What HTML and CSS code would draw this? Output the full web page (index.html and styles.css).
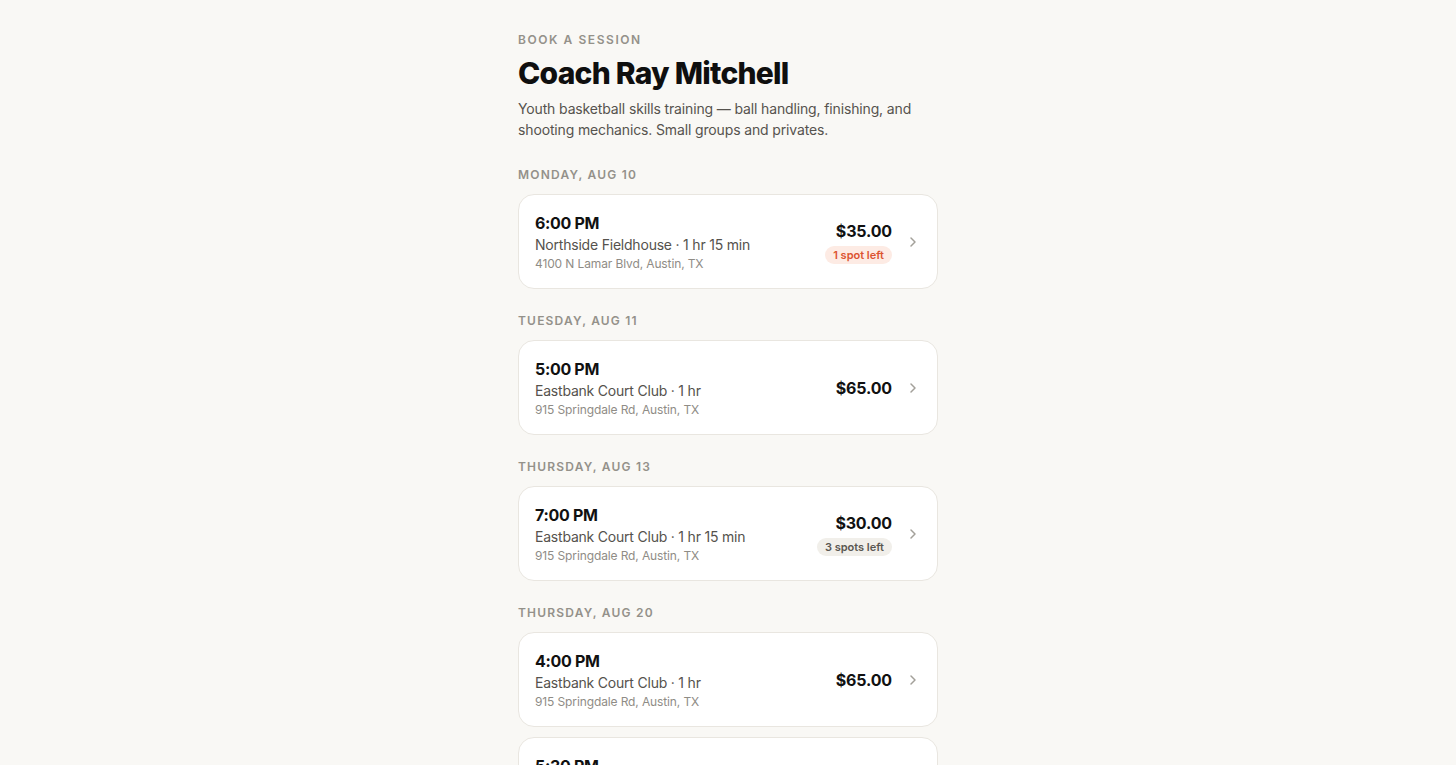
FILE: index.html
```html
<!DOCTYPE html>
<html lang="en">
<head>
    <meta charset="UTF-8">
    <meta name="viewport" content="width=device-width, initial-scale=1.0">
    <title>Book a Session - Coach Ray Mitchell</title>
    <link rel="stylesheet" href="styles.css">
</head>
<body>
    <div class="page">
        <div class="eyebrow">BOOK A SESSION</div>
        <h1 class="coach-name">Coach Ray Mitchell</h1>
        <p class="intro">Youth basketball skills training — ball handling, finishing, and shooting mechanics. Small groups and privates.</p>

        <div class="day">
            <div class="day-label">MONDAY, AUG 10</div>
            <a class="slot" href="#">
                <div class="slot-info">
                    <div class="slot-time">6:00 PM</div>
                    <div class="slot-venue">Northside Fieldhouse · 1 hr 15 min</div>
                    <div class="slot-address">4100 N Lamar Blvd, Austin, TX</div>
                </div>
                <div class="slot-side">
                    <div class="slot-price">$35.00</div>
                    <span class="badge badge-low">1 spot left</span>
                </div>
                <svg class="chevron" width="8" height="12" viewBox="0 0 8 12"><path d="M2 2l4 4-4 4" fill="none" stroke="currentColor" stroke-width="1.5" stroke-linecap="round" stroke-linejoin="round"/></svg>
            </a>
        </div>

        <div class="day">
            <div class="day-label">TUESDAY, AUG 11</div>
            <a class="slot" href="#">
                <div class="slot-info">
                    <div class="slot-time">5:00 PM</div>
                    <div class="slot-venue">Eastbank Court Club · 1 hr</div>
                    <div class="slot-address">915 Springdale Rd, Austin, TX</div>
                </div>
                <div class="slot-side">
                    <div class="slot-price">$65.00</div>
                </div>
                <svg class="chevron" width="8" height="12" viewBox="0 0 8 12"><path d="M2 2l4 4-4 4" fill="none" stroke="currentColor" stroke-width="1.5" stroke-linecap="round" stroke-linejoin="round"/></svg>
            </a>
        </div>

        <div class="day">
            <div class="day-label">THURSDAY, AUG 13</div>
            <a class="slot" href="#">
                <div class="slot-info">
                    <div class="slot-time">7:00 PM</div>
                    <div class="slot-venue">Eastbank Court Club · 1 hr 15 min</div>
                    <div class="slot-address">915 Springdale Rd, Austin, TX</div>
                </div>
                <div class="slot-side">
                    <div class="slot-price">$30.00</div>
                    <span class="badge">3 spots left</span>
                </div>
                <svg class="chevron" width="8" height="12" viewBox="0 0 8 12"><path d="M2 2l4 4-4 4" fill="none" stroke="currentColor" stroke-width="1.5" stroke-linecap="round" stroke-linejoin="round"/></svg>
            </a>
        </div>

        <div class="day">
            <div class="day-label">THURSDAY, AUG 20</div>
            <a class="slot" href="#">
                <div class="slot-info">
                    <div class="slot-time">4:00 PM</div>
                    <div class="slot-venue">Eastbank Court Club · 1 hr</div>
                    <div class="slot-address">915 Springdale Rd, Austin, TX</div>
                </div>
                <div class="slot-side">
                    <div class="slot-price">$65.00</div>
                </div>
                <svg class="chevron" width="8" height="12" viewBox="0 0 8 12"><path d="M2 2l4 4-4 4" fill="none" stroke="currentColor" stroke-width="1.5" stroke-linecap="round" stroke-linejoin="round"/></svg>
            </a>
            <a class="slot" href="#">
                <div class="slot-info">
                    <div class="slot-time">5:30 PM</div>
                    <div class="slot-venue">Eastbank Court Club · 1 hr 15 min</div>
                    <div class="slot-address">915 Springdale Rd, Austin, TX</div>
                </div>
                <div class="slot-side">
                    <div class="slot-price">$30.00</div>
                    <span class="badge">2 spots left</span>
                </div>
                <svg class="chevron" width="8" height="12" viewBox="0 0 8 12"><path d="M2 2l4 4-4 4" fill="none" stroke="currentColor" stroke-width="1.5" stroke-linecap="round" stroke-linejoin="round"/></svg>
            </a>
        </div>
    </div>
</body>
</html>
```

FILE: styles.css
```css
body {
    margin: 0;
    background-color: #f9f8f5;
    font-family: Inter, "Noto Sans", sans-serif;
    color: #111;
}

.page {
    width: 420px;
    margin: 0 auto;
    padding: 32px 0 40px;
}

.eyebrow {
    font-size: 12px;
    line-height: 16px;
    font-weight: 600;
    letter-spacing: 0.13em;
    color: #94918a;
}

.coach-name {
    margin: 7px 0 0;
    font-size: 30px;
    line-height: 36px;
    font-weight: 800;
    letter-spacing: -0.025em;
    color: #0f0f0f;
}

.intro {
    margin: 7px 0 0;
    font-size: 14px;
    line-height: 21px;
    letter-spacing: -0.01em;
    color: #56534e;
}

.day {
    margin-top: 27px;
}

.day + .day {
    margin-top: 24px;
}

.day-label {
    font-size: 12px;
    line-height: 16px;
    font-weight: 600;
    letter-spacing: 0.1em;
    color: #94918a;
    margin-bottom: 11px;
}

.slot {
    display: flex;
    align-items: center;
    background: #fff;
    border: 1px solid #e9e6e0;
    border-radius: 16px;
    padding: 17px 20px 16px 16px;
    text-decoration: none;
    color: inherit;
}

.slot + .slot {
    margin-top: 10px;
}

.slot-info {
    flex: 1;
}

.slot-time {
    font-size: 16px;
    line-height: 22px;
    font-weight: 700;
    letter-spacing: -0.02em;
    color: #111;
}

.slot-venue {
    font-size: 14px;
    line-height: 22px;
    letter-spacing: -0.015em;
    color: #55524d;
}

.slot-address {
    font-size: 12px;
    line-height: 16px;
    letter-spacing: -0.01em;
    color: #8f8c86;
}

.slot-side {
    display: flex;
    flex-direction: column;
    align-items: flex-end;
    gap: 4px;
}

.slot-price {
    font-size: 16px;
    line-height: 22px;
    font-weight: 700;
    letter-spacing: -0.01em;
    color: #111;
}

.badge {
    font-size: 11px;
    line-height: 18px;
    font-weight: 600;
    padding: 0 8px;
    border-radius: 9px;
    background: #f1efea;
    color: #5a5751;
}

.badge-low {
    background: #fdebe4;
    color: #dc5330;
}

.chevron {
    margin-left: 17px;
    color: #a3a09a;
}
```
